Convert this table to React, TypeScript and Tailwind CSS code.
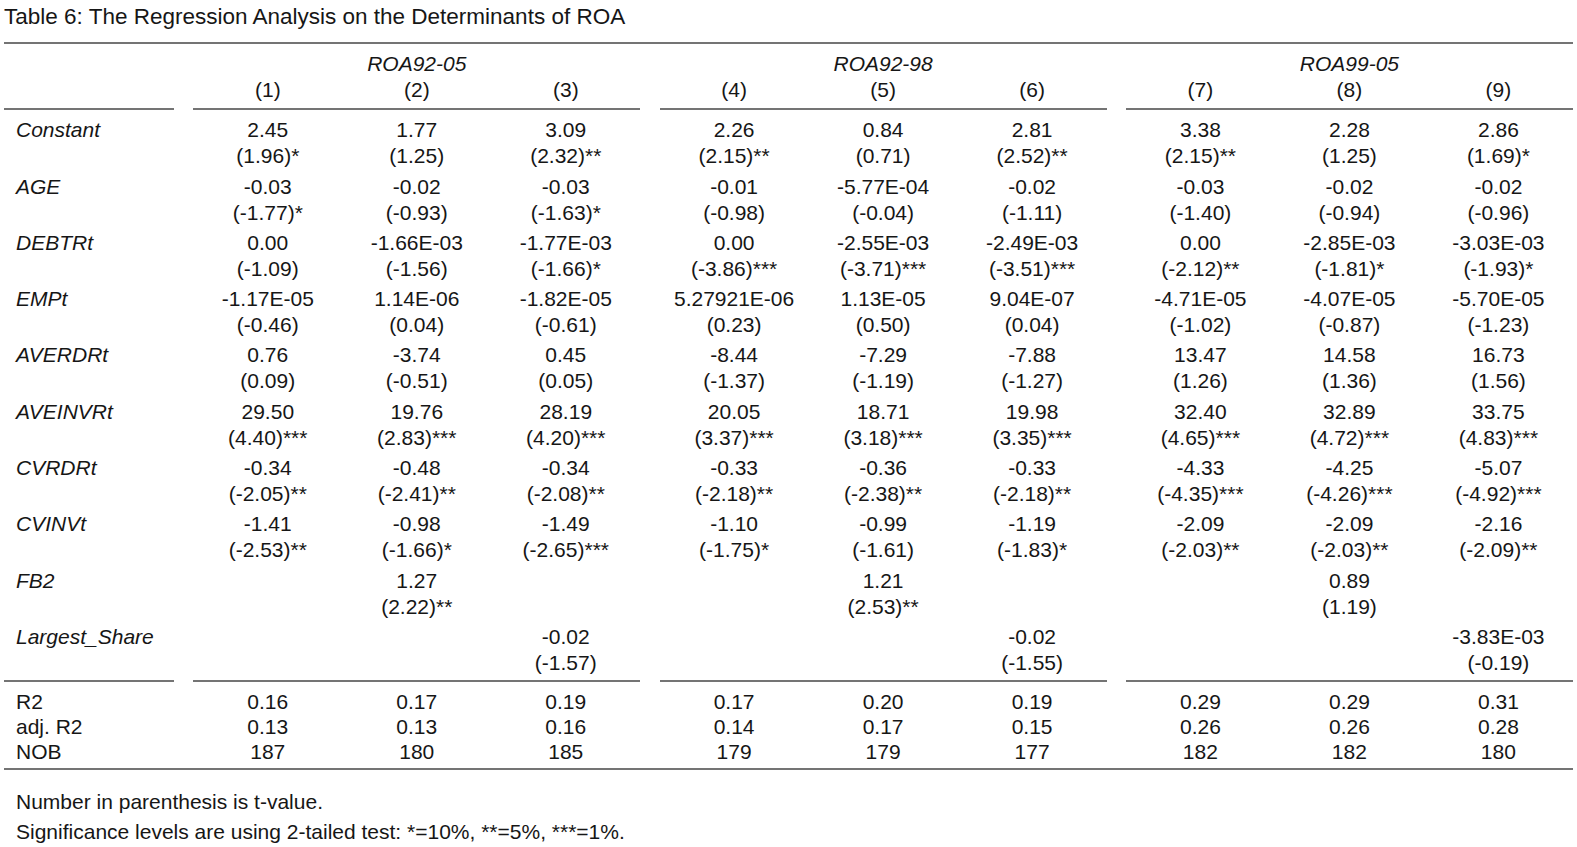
type Cell = [string, string] | null

type Row = {label: string; cells: Cell[]}

const rows: Row[] = [
  {
    label: 'Constant',
    cells: [
      ['2.45', '(1.96)*'],
      ['1.77', '(1.25)'],
      ['3.09', '(2.32)**'],
      ['2.26', '(2.15)**'],
      ['0.84', '(0.71)'],
      ['2.81', '(2.52)**'],
      ['3.38', '(2.15)**'],
      ['2.28', '(1.25)'],
      ['2.86', '(1.69)*'],
    ],
  },
  {
    label: 'AGE',
    cells: [
      ['-0.03', '(-1.77)*'],
      ['-0.02', '(-0.93)'],
      ['-0.03', '(-1.63)*'],
      ['-0.01', '(-0.98)'],
      ['-5.77E-04', '(-0.04)'],
      ['-0.02', '(-1.11)'],
      ['-0.03', '(-1.40)'],
      ['-0.02', '(-0.94)'],
      ['-0.02', '(-0.96)'],
    ],
  },
  {
    label: 'DEBTRt',
    cells: [
      ['0.00', '(-1.09)'],
      ['-1.66E-03', '(-1.56)'],
      ['-1.77E-03', '(-1.66)*'],
      ['0.00', '(-3.86)***'],
      ['-2.55E-03', '(-3.71)***'],
      ['-2.49E-03', '(-3.51)***'],
      ['0.00', '(-2.12)**'],
      ['-2.85E-03', '(-1.81)*'],
      ['-3.03E-03', '(-1.93)*'],
    ],
  },
  {
    label: 'EMPt',
    cells: [
      ['-1.17E-05', '(-0.46)'],
      ['1.14E-06', '(0.04)'],
      ['-1.82E-05', '(-0.61)'],
      ['5.27921E-06', '(0.23)'],
      ['1.13E-05', '(0.50)'],
      ['9.04E-07', '(0.04)'],
      ['-4.71E-05', '(-1.02)'],
      ['-4.07E-05', '(-0.87)'],
      ['-5.70E-05', '(-1.23)'],
    ],
  },
  {
    label: 'AVERDRt',
    cells: [
      ['0.76', '(0.09)'],
      ['-3.74', '(-0.51)'],
      ['0.45', '(0.05)'],
      ['-8.44', '(-1.37)'],
      ['-7.29', '(-1.19)'],
      ['-7.88', '(-1.27)'],
      ['13.47', '(1.26)'],
      ['14.58', '(1.36)'],
      ['16.73', '(1.56)'],
    ],
  },
  {
    label: 'AVEINVRt',
    cells: [
      ['29.50', '(4.40)***'],
      ['19.76', '(2.83)***'],
      ['28.19', '(4.20)***'],
      ['20.05', '(3.37)***'],
      ['18.71', '(3.18)***'],
      ['19.98', '(3.35)***'],
      ['32.40', '(4.65)***'],
      ['32.89', '(4.72)***'],
      ['33.75', '(4.83)***'],
    ],
  },
  {
    label: 'CVRDRt',
    cells: [
      ['-0.34', '(-2.05)**'],
      ['-0.48', '(-2.41)**'],
      ['-0.34', '(-2.08)**'],
      ['-0.33', '(-2.18)**'],
      ['-0.36', '(-2.38)**'],
      ['-0.33', '(-2.18)**'],
      ['-4.33', '(-4.35)***'],
      ['-4.25', '(-4.26)***'],
      ['-5.07', '(-4.92)***'],
    ],
  },
  {
    label: 'CVINVt',
    cells: [
      ['-1.41', '(-2.53)**'],
      ['-0.98', '(-1.66)*'],
      ['-1.49', '(-2.65)***'],
      ['-1.10', '(-1.75)*'],
      ['-0.99', '(-1.61)'],
      ['-1.19', '(-1.83)*'],
      ['-2.09', '(-2.03)**'],
      ['-2.09', '(-2.03)**'],
      ['-2.16', '(-2.09)**'],
    ],
  },
  {
    label: 'FB2',
    cells: [null, ['1.27', '(2.22)**'], null, null, ['1.21', '(2.53)**'], null, null, ['0.89', '(1.19)'], null],
  },
  {
    label: 'Largest_Share',
    cells: [null, null, ['-0.02', '(-1.57)'], null, null, ['-0.02', '(-1.55)'], null, null, ['-3.83E-03', '(-0.19)']],
  },
]

const stats: {label: string; values: string[]}[] = [
  {label: 'R2', values: ['0.16', '0.17', '0.19', '0.17', '0.20', '0.19', '0.29', '0.29', '0.31']},
  {label: 'adj. R2', values: ['0.13', '0.13', '0.16', '0.14', '0.17', '0.15', '0.26', '0.26', '0.28']},
  {label: 'NOB', values: ['187', '180', '185', '179', '179', '177', '182', '182', '180']},
]

const groups = ['ROA92-05', 'ROA92-98', 'ROA99-05']

const rowGrid = 'grid grid-cols-[170px_447px_447px_447px] gap-x-[19.3px]'

function Rule() {
  return <div className="h-[2px] bg-[#747474]" />
}

function SegmentRule() {
  return (
    <div className={rowGrid}>
      <Rule />
      <Rule />
      <Rule />
      <Rule />
    </div>
  )
}

// split nine values into the three model groups
function byGroup<T>(list: T[]): T[][] {
  return [list.slice(0, 3), list.slice(3, 6), list.slice(6, 9)]
}

export default function App() {
  return (
    <div className="min-h-screen bg-white text-[#161616] font-['Liberation_Sans',Arial,sans-serif]">
      <div className="pl-[4px] pt-[4px] text-[22.5px] leading-[26px]">
        Table 6: The Regression Analysis on the Determinants of ROA
      </div>

      <div className="ml-[4px] mt-[11.6px] w-[1569px] text-[21px]">
        <Rule />

        {/* column headers */}
        <div className={`${rowGrid} pt-[7.6px] pb-[5px] leading-[26px]`}>
          <div />
          {groups.map((g, gi) => (
            <div key={g} className="text-center">
              <div className="italic">{g}</div>
              <div className="grid grid-cols-3">
                {[1, 2, 3].map((n) => (
                  <div key={n}>({gi * 3 + n})</div>
                ))}
              </div>
            </div>
          ))}
        </div>
        <SegmentRule />

        {/* coefficients */}
        <div className="pt-[7.1px]">
          {rows.map((row) => (
            <div key={row.label} className={`${rowGrid} pb-[4.3px] leading-[26px]`}>
              <div className="pl-[12px] italic">{row.label}</div>
              {byGroup(row.cells).map((cells, gi) => (
                <div key={gi} className="grid grid-cols-3 text-center">
                  {cells.map((c, ci) => (
                    <div key={ci}>
                      {c && (
                        <>
                          <div>{c[0]}</div>
                          <div>{c[1]}</div>
                        </>
                      )}
                    </div>
                  ))}
                </div>
              ))}
            </div>
          ))}
        </div>
        <SegmentRule />

        {/* fit statistics */}
        <div className="pt-[7px] pb-[3.5px] leading-[25px]">
          {stats.map((s) => (
            <div key={s.label} className={rowGrid}>
              <div className="pl-[12px]">{s.label}</div>
              {byGroup(s.values).map((vals, gi) => (
                <div key={gi} className="grid grid-cols-3 text-center">
                  {vals.map((v, vi) => (
                    <div key={vi}>{v}</div>
                  ))}
                </div>
              ))}
            </div>
          ))}
        </div>
        <Rule />

        <div className="pl-[12px] pt-[17px] leading-[30px]">
          <div>Number in parenthesis is t-value.</div>
          <div>Significance levels are using 2-tailed test: *=10%, **=5%, ***=1%.</div>
        </div>
      </div>
    </div>
  )
}
